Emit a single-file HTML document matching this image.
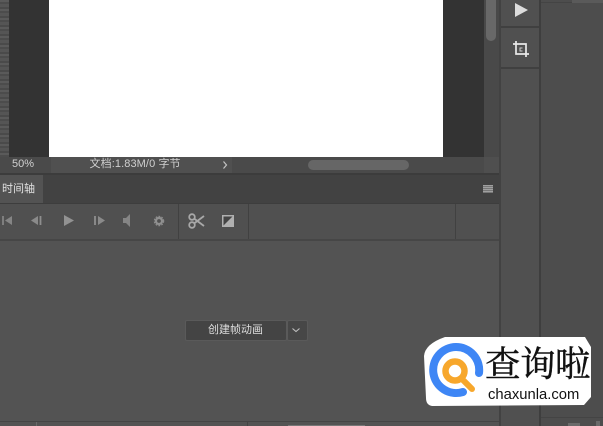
<!DOCTYPE html>
<html>
<head>
<meta charset="utf-8">
<style>
html,body{margin:0;padding:0;background:#535353;}
#p{position:relative;width:603px;height:426px;overflow:hidden;background:#535353;font-family:"Liberation Sans","Noto Sans CJK SC",sans-serif;filter:blur(.35px);}
#p div{position:absolute;}
#p svg{position:absolute;left:0;top:0;}
.t{white-space:nowrap;line-height:1;}
</style>
</head>
<body>
<div id="p">
  <!-- ruler -->
  <div style="left:0;top:0;width:9px;height:157px;background:repeating-linear-gradient(180deg,#5a5a5a 0 2px,#4c4c4c 2px 4px,#555 4px 7px,#4a4a4a 7px 9px);"></div>
  <!-- canvas bg -->
  <div style="left:9px;top:0;width:475px;height:157px;background:#333;"></div>
  <div style="left:49px;top:0;width:394px;height:157px;background:#fff;"></div>
  <!-- right scrollbar -->
  <div style="left:484px;top:0;width:15px;height:173px;background:#494949;"></div>
  <div style="left:486px;top:0;width:10px;height:41px;border-radius:0 0 5px 5px;background:#686868;"></div>
  <!-- status bar -->
  <div style="left:0;top:157px;width:499px;height:16px;background:#4a4a4a;"></div>
  <div style="left:51px;top:157px;width:181px;height:16px;background:#505050;"></div>
  <div class="t" style="left:12px;top:159px;font-size:11px;color:#d0d0d0;">50%</div>
  <div class="t" style="left:89.500px;top:158.500px;font-size:11px;letter-spacing:.1px;color:#d0d0d0;">文档:1.83M/0 字节</div>
  <div style="left:308px;top:160px;width:101px;height:10px;border-radius:5px;background:#666;"></div>
  <div style="left:484px;top:157px;width:15px;height:16px;background:#4f4f4f;"></div>
  <!-- panel header -->
  <div style="left:0;top:173px;width:499px;height:2px;background:#3c3c3c;"></div>
  <div style="left:0;top:175px;width:499px;height:28px;background:#424242;"></div>
  <div style="left:0;top:175px;width:43px;height:28px;background:#535353;"></div>
  <div class="t" style="left:2px;top:184px;font-size:11px;color:#e0e0e0;">时间轴</div>
  <div style="left:483px;top:185px;width:10px;height:8px;background:repeating-linear-gradient(180deg,#a0a0a0 0 1px,#777 1px 2px);"></div>
  <!-- toolbar -->
  <div style="left:0;top:203px;width:499px;height:1px;background:#3d3d3d;"></div>
  <div style="left:0;top:204px;width:499px;height:35px;background:#505050;"></div>
  <div style="left:0;top:239px;width:499px;height:2px;background:#464646;"></div>
  <div style="left:178px;top:204px;width:1px;height:35px;background:#414141;"></div>
  <div style="left:248px;top:204px;width:1px;height:35px;background:#414141;"></div>
  <div style="left:455px;top:204px;width:1px;height:35px;background:#414141;"></div>
  <!-- right columns -->
  <div style="left:499px;top:0;width:2px;height:426px;background:#424242;"></div>
  <div style="left:501px;top:0;width:38px;height:426px;background:#505050;"></div>
  <div style="left:539px;top:0;width:2px;height:426px;background:#3e3e3e;"></div>
  <div style="left:541px;top:0;width:62px;height:426px;background:#4d4d4d;"></div>
  <div style="left:541px;top:2px;width:31px;height:1px;background:#444;"></div>
  <div style="left:572px;top:0;width:31px;height:3px;background:#5a5a5a;"></div>
  <div style="left:501px;top:26px;width:38px;height:2px;background:#404040;"></div>
  <div style="left:501px;top:67px;width:38px;height:2px;background:#404040;"></div>
  <div style="left:541px;top:417px;width:62px;height:1px;background:#444;"></div>
  <div style="left:568px;top:423px;width:12px;height:3px;background:#6a6a6a;"></div>
  <div style="left:596px;top:421px;width:4px;height:5px;background:#6a6a6a;"></div>
  <!-- bottom strip -->
  <div style="left:0;top:421px;width:499px;height:1px;background:#444;"></div>
  <div style="left:36px;top:422px;width:1px;height:4px;background:#6a6a6a;"></div>
  <div style="left:247px;top:422px;width:1px;height:4px;background:#444;"></div>
  <div style="left:288px;top:425px;width:77px;height:1px;background:#777;"></div>
  <!-- create button -->
  <div style="left:185px;top:320px;width:100px;height:19px;border-radius:2px;background:#444;border:1px solid #5a5a5a;box-sizing:content-box;"></div>
  <div class="t" style="left:208px;top:325px;font-size:11px;color:#dedede;">创建帧动画</div>
  <div style="left:287px;top:320px;width:19px;height:19px;border-radius:2px;background:#474747;border:1px solid #5a5a5a;"></div>
  <!-- icons -->
  <svg width="603" height="426" viewBox="0 0 603 426">
    <!-- status chevron -->
    <path d="M223.500 161.500l3 3.500-3 3.500" fill="none" stroke="#c4c4c4" stroke-width="1.200"/>
    <!-- skip start -->
    <path d="M3 216v9" stroke="#8e8e8e" stroke-width="1.500"/>
    <path d="M12 216v9l-7-4.500z" fill="#858585"/>
    <!-- prev -->
    <path d="M38 216v9l-7-4.500z" fill="#8a8a8a"/>
    <path d="M40.500 216v9" stroke="#8e8e8e" stroke-width="1.800"/>
    <!-- play -->
    <path d="M64 215v11l10-5.500z" fill="#929292"/>
    <!-- next -->
    <path d="M95 216v9" stroke="#8e8e8e" stroke-width="1.800"/>
    <path d="M98 216v9l7-4.500z" fill="#8a8a8a"/>
    <!-- speaker -->
    <path d="M123 218h3l4-4v13l-4-4h-3z" fill="#858585"/>
    <!-- gear -->
    <circle cx="159" cy="221" r="3" fill="none" stroke="#909090" stroke-width="2.200"/>
    <circle cx="159" cy="221" r="4.600" fill="none" stroke="#8c8c8c" stroke-width="1.300" stroke-dasharray="1.800 1.200"/>
    <!-- scissors -->
    <circle cx="192" cy="217" r="2.800" fill="none" stroke="#a8a8a8" stroke-width="1.800"/>
    <circle cx="192" cy="225" r="2.800" fill="none" stroke="#a8a8a8" stroke-width="1.800"/>
    <path d="M194 218.500L204 226M194 223.500L204 216" stroke="#a8a8a8" stroke-width="1.800" fill="none"/>
    <!-- transition -->
    <rect x="222" y="215" width="12" height="12" fill="#b0b0b0"/>
    <path d="M223.500 225.500V216.500H232.500z" fill="#444"/>
    <!-- dropdown chevron -->
    <path d="M292.500 328.500l3.500 3 3.500-3" fill="none" stroke="#c0c0c0" stroke-width="1.100"/>
    <!-- tool play -->
    <path d="M515 3v14l13-7z" fill="#dcdcdc"/>
    <!-- crop -->
    <path d="M516 41v13h13M513 44h13v13" fill="none" stroke="#e8e8e8" stroke-width="1.700"/>
    <path d="M519.500 47.500h3v1h-2v2h2v1h-3z" fill="#cfcfcf"/>
    <!-- badge -->
    <path d="M445 337H585L591 347V397L584 405L432 406Q426 405 426 398L424 356Q425 344 445 337Z" fill="#fff"/>
    <path d="M479 373A23 23 0 1 0 463 392" fill="none" stroke="#3e86f5" stroke-width="8" stroke-linecap="round"/>
    <circle cx="455" cy="371" r="9.500" fill="none" stroke="#f7a72c" stroke-width="6.500"/>
    <path d="M463 380L472 389" fill="none" stroke="#f7a72c" stroke-width="6" stroke-linecap="round"/>
  </svg>
  <div class="t" style="left:485px;top:347px;font-family:'Liberation Serif','Noto Serif CJK SC',serif;font-size:35.500px;color:#111;letter-spacing:-.5px;-webkit-text-stroke:.4px #111;">查询啦</div>
  <div class="t" style="left:488px;top:388px;font-size:14.800px;color:#111;">chaxunla.com</div>
</div>
</body>
</html>
